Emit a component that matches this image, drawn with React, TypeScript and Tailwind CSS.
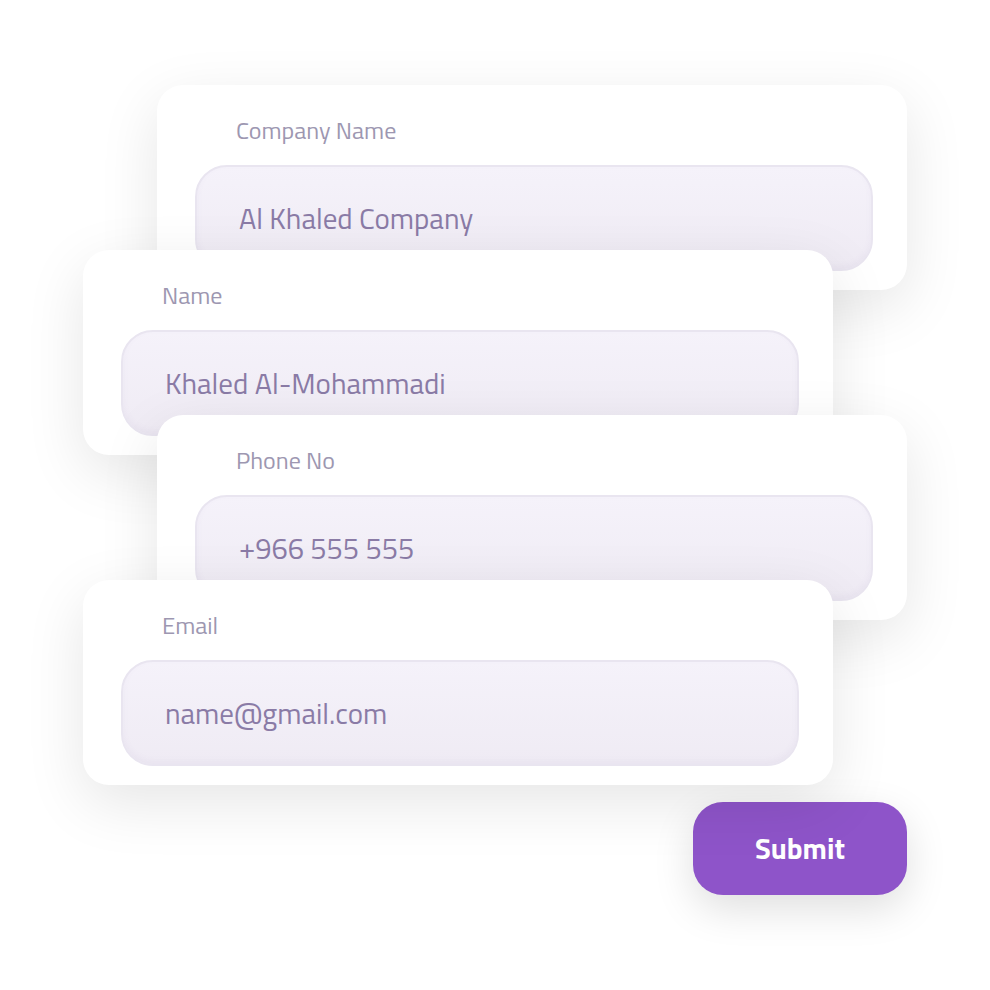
const fields = [
  { label: 'Company Name', value: 'Al Khaled Company', shift: 'ml-[157px]' },
  { label: 'Name', value: 'Khaled Al-Mohammadi', shift: 'ml-[83px]' },
  { label: 'Phone No', value: '+966 555 555', shift: 'ml-[157px]' },
  { label: 'Email', value: 'name@gmail.com', shift: 'ml-[83px]' },
]

function FieldCard({ label, value, shift }: { label: string; value: string; shift: string }) {
  return (
    <div
      className={`relative ${shift} w-[750px] h-[205px] rounded-[26px] bg-white pt-[31px] pl-[38px] pr-[34px] shadow-[0_18px_60px_rgba(0,0,0,0.1)] [&:not(:first-child)]:-mt-[40px]`}
    >
      <div className="pl-[41px] text-[24px] leading-[28px] text-[#9d97b1]">{label}</div>
      <div className="mt-[21px] flex h-[106px] items-center rounded-[32px] border-2 border-[#e9e5f0] bg-gradient-to-b from-[#f5f2fa] to-[#efebf4] pl-[42px] pt-[2px] shadow-[inset_0_-3px_6px_rgba(120,100,150,0.05)]">
        <span className="text-[29px] text-[#8a7ba6]">{value}</span>
      </div>
    </div>
  )
}

export default function App() {
  return (
    <main
      className="w-[990px] h-[990px] bg-white pt-[85px]"
      style={{ fontFamily: '"Titillium Web", "Noto Sans", sans-serif' }}
    >
      <div className="flex flex-col">
        {fields.map((f) => (
          <FieldCard key={f.label} {...f} />
        ))}
      </div>
      <div className="mt-[17px] ml-[693px] flex h-[93px] w-[214px] items-center justify-center rounded-[30px] bg-[#8e54c9] shadow-[0_14px_40px_rgba(0,0,0,0.13)]">
        <span className="text-[29px] font-bold text-white">Submit</span>
      </div>
    </main>
  )
}
